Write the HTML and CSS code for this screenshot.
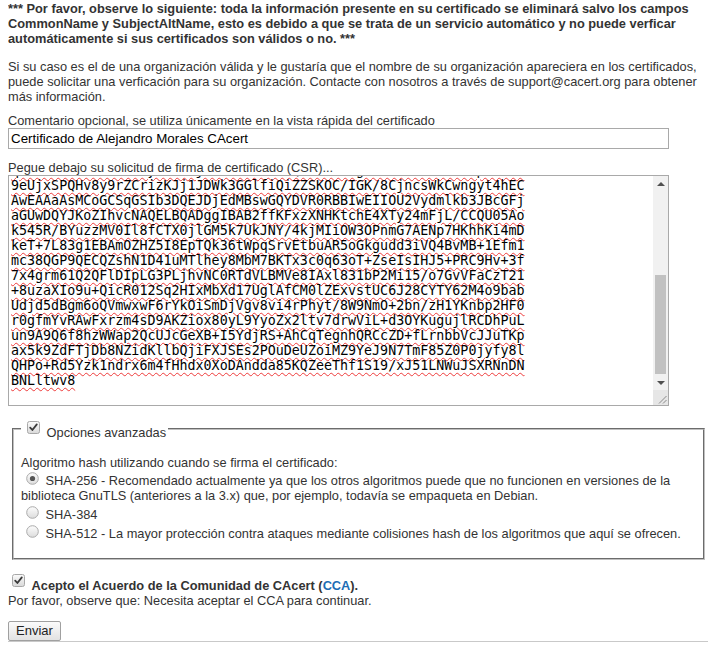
FILE: index.html
```html
<!DOCTYPE html>
<html lang="es">
<head>
<meta charset="utf-8">
<title>Nuevo certificado de servidor</title>
<link rel="stylesheet" href="styles.css">
</head>
<body>
<p class="warn">*** Por favor, observe lo siguiente: toda la información presente en su certificado se eliminará salvo los campos CommonName y SubjectAltName, esto es debido a que se trata de un servicio automático y no puede verficar automáticamente si sus certificados son válidos o no. ***</p>
<p class="info">Si su caso es el de una organización válida y le gustaría que el nombre de su organización apareciera en los certificados, puede solicitar una verficación para su organización. Contacte con nosotros a través de support@cacert.org para obtener más información.</p>
<form class="csr-form">
  <label class="field-label" for="comment">Comentario opcional, se utiliza únicamente en la vista rápida del certificado</label>
  <input class="text-input" id="comment" type="text" value="Certificado de Alejandro Morales CAcert">
  <label class="field-label" for="csr">Pegue debajo su solicitud de firma de certificado (CSR)...</label>
  <div class="csr-wrap">
  <textarea class="csr" id="csr">-----BEGIN CERTIFICATE REQUEST-----
MIIEpzCCAo8CAQAwLDEqMCgGA1UEAxMhU2Vydmlkb3JBcGFjaGUubW9yYWxlcy5s
b2NhbGRvbWFpbjCCAiIwDQYJKoZIhvcNAQEBBQADggIPADCCAgoCggIBAMx3q1Zk
Tg8pXQ2rWk7hY4bNv1LsJfE9aCmO3uRz6dKiV0yHnGtB5xPqWe2oAjUlSc8MvDr7
Hf4kZa9NbYpQi1wEtLm6RgCx3sVuJo0dKe5nTyBhAqFz2WcXlMiP7rGv8OjUs4Dk
Lq9eNb3wTy6HmAcRf1xVzKpI0gSoE7dJu2iYnMhCt5lWaBv8QeXr4PkFsDg6zNjO
pU3yKcGmA1oTb7eRwLx9fVh2iSnZq0dE5jMtY8uBkCl4WaHrNs6gPvIzXo1eQfDy
Fn0hRk2XbVwJq7mCtLs9aEoPd5yGiU3zKe8rBxWl1NfQvTj4YhMcAp6SuO0gDzIa
Vt5cLmY8qBeGd2kWnR0xHsPj3uAfT9iOzK1lMbEr7gXyNwCv4hUaSeQ6oIdpZ5Fn
Jb2xQw9RkTmAe1sLhVgP7uYc3nKzDo0iXf8tGrM5EyBqHaW4lCjOvN6dSpUI2eZk
Xr7nBy5Mh1aKtQwLe9cGs3fVpDj0oUzRi8TbNxE2mYkAqW4lHg6vCSdPuZOIFJ5n
qD1zWe8sRbXnTkVu3yGhLa0jMc7Pi9fEo5tQYwK2NbSgrUAZdlHx4vICm6pBOJFe
9eUjxSPQHv8y9rZCrizKJj1JDWk3GGlfiQiZZSKOC/IGK/8CjncsWkCwngyt4hEC
AwEAAaAsMCoGCSqGSIb3DQEJDjEdMBswGQYDVR0RBBIwEIIOU2Vydmlkb3JBcGFj
aGUwDQYJKoZIhvcNAQELBQADggIBAB2ffKFxzXNHKtchE4XTy24mFjL/CCQU05Ao
k545R/BYuzzMV0Il8fCTX0jlGM5k7UkJNY/4kjMIiOW3OPnmG7AENp7HKhhKi4mD
keT+7L83g1EBAmOZHZ5I8EpTQk36tWpqSrvEtbuAR5oGkgudd3iVQ4BvMB+1Efm1
mc38QGP9QECQZshN1D41uMTlhey8MbM7BKTx3c0q63oT+ZseIsIHJ5+PRC9Hv+3f
7x4grm61Q2QFlDIpLG3PLjhvNC0RTdVLBMVe8IAxl831bP2Mi15/o7GvVFaCzT21
+8uzaXIo9u+QicR012Sq2HIxMbXd17UglAfCM0lZExvstUC6J28CYTY62M4o9bab
Udjd5dBgm6oQVmwxwF6rYkOiSmDjVgv8vi4rPhyt/8W9NmO+2bn/zH1YKnbp2HF0
r0gfmYvRAwFxrzm4sD9AKZiox80yL9YyoZx2ltv7drwViL+d3OYKugujlRCDhPuL
un9A9Q6f8hzWWap2QcUJcGeXB+I5YdjRS+AhCqTegnhQRCcZD+fLrnbbVcJJuTKp
ax5k9ZdFTjDb8NZidKllbQjiFXJSEs2POuDeUZoiMZ9YeJ9N7TmF85Z0P0jyfy8l
QHPo+Rd5Yzk1ndrx6m4fHhdx0XoDAndda85KQZeeThf1S19/xJ51LNWuJSXRNnDN
BNLltwv8
</textarea>
  <div class="sb" aria-hidden="true">
    <div class="sb-btn"><span class="tri-up"></span></div>
    <div class="sb-track"><div class="sb-thumb"></div></div>
    <div class="sb-btn"><span class="tri-down"></span></div>
    <div class="sb-corner"><svg width="15" height="15" viewBox="0 0 15 15"><path d="M13.5 6 L6 13.5 M13.5 10 L10 13.5" stroke="#8a8a8a" stroke-width="1" fill="none"/></svg></div>
  </div>
  </div>

  <fieldset class="advanced">
    <legend class="adv-legend"><span class="check"><svg width="13" height="13" viewBox="0 0 13 13"><defs><linearGradient id="cbg" x1="0" y1="0" x2="0" y2="1"><stop offset="0" stop-color="#fbfbfb"/><stop offset="1" stop-color="#d9d9d9"/></linearGradient></defs><rect x="0.5" y="0.5" width="12" height="12" rx="2" fill="url(#cbg)" stroke="#a8a8a8"/><path d="M3.2 6.6 L5.4 9 L9.8 3.4" fill="none" stroke="#3a3a3a" stroke-width="1.8" stroke-linecap="round" stroke-linejoin="round"/></svg></span> Opciones avanzadas</legend>
    <div class="algo">Algoritmo hash utilizando cuando se firma el certificado:</div>
    <div class="opt opt-1"><span class="radio"><svg width="13" height="13" viewBox="0 0 13 13"><defs><linearGradient id="rbg" x1="0" y1="0" x2="0" y2="1"><stop offset="0" stop-color="#fdfdfd"/><stop offset="1" stop-color="#dcdcdc"/></linearGradient></defs><circle cx="6.5" cy="6.5" r="5.8" fill="url(#rbg)" stroke="#ababab"/><circle cx="6.5" cy="6.5" r="2.6" fill="#555"/></svg></span> SHA-256 - Recomendado actualmente ya que los otros algoritmos puede que no funcionen en versiones de la biblioteca GnuTLS (anteriores a la 3.x) que, por ejemplo, todavía se empaqueta en Debian.</div>
    <div class="opt opt-2"><span class="radio"><svg width="13" height="13" viewBox="0 0 13 13"><circle cx="6.5" cy="6.5" r="5.8" fill="url(#rbg)" stroke="#ababab"/></svg></span> SHA-384</div>
    <div class="opt opt-3"><span class="radio"><svg width="13" height="13" viewBox="0 0 13 13"><circle cx="6.5" cy="6.5" r="5.8" fill="url(#rbg)" stroke="#ababab"/></svg></span> SHA-512 - La mayor protección contra ataques mediante colisiones hash de los algoritmos que aquí se ofrecen.</div>
  </fieldset>

  <div class="accept"><span class="check"><svg width="13" height="13" viewBox="0 0 13 13"><rect x="0.5" y="0.5" width="12" height="12" rx="2" fill="url(#cbg)" stroke="#a8a8a8"/><path d="M3.2 6.6 L5.4 9 L9.8 3.4" fill="none" stroke="#3a3a3a" stroke-width="1.8" stroke-linecap="round" stroke-linejoin="round"/></svg></span> <strong>Acepto el Acuerdo de la Comunidad de CAcert (<a class="cca" href="#">CCA</a>).</strong></div>
  <div class="note">Por favor, observe que: Necesita aceptar el CCA para continuar.</div>
  <div class="actions"><button class="submit" type="button">Enviar</button></div>
</form>
<div class="footer-rule"></div>
<script src="script.js"></script>
</body>
</html>
```

FILE: styles.css
```css
html, body {
  background: #fff;
}
body {
  margin: 0 8px;
  padding-top: 1px;
  font-family: "Liberation Sans", Arial, sans-serif;
  font-size: 12.8px;
  line-height: 15px;
  color: #333;
}
.warn {
  margin: 0 0 13px;
  font-weight: bold;
}
.info {
  margin: 0 0 9px;
}
.csr-form {
  margin: 0;
}
.field-label {
  display: block;
}
.text-input {
  display: block;
  box-sizing: border-box;
  width: 661px;
  height: 21px;
  margin: 0 0 11px;
  padding: 1px 2px;
  border: 1px solid #a9a9a9;
  font-family: "Liberation Sans", Arial, sans-serif;
  font-size: 13.33px;
  color: #000;
  background: #fff;
}
.csr-wrap {
  position: relative;
  width: 661px;
  height: 231px;
}
.csr {
  display: block;
  box-sizing: border-box;
  width: 661px;
  height: 231px;
  margin: 0;
  padding: 2px 18px 2px 2px;
  border: 1px solid #a9a9a9;
  font-family: "DejaVu Sans Mono", monospace;
  font-size: 13.33px;
  line-height: 15px;
  color: #000;
  background: #fff;
  white-space: pre;
  overflow: hidden;
  resize: none;
  text-decoration: underline wavy #ee3b3b;
  text-decoration-thickness: 1px;
  text-underline-offset: 2px;
}
.sb {
  position: absolute;
  top: 1px;
  right: 1px;
  bottom: 1px;
  width: 15px;
  display: flex;
  flex-direction: column;
  background: #f1f1f1;
}
.sb-btn {
  height: 15px;
  flex: none;
  display: flex;
  align-items: center;
  justify-content: center;
}
.tri-up {
  width: 0;
  height: 0;
  border-left: 4px solid transparent;
  border-right: 4px solid transparent;
  border-bottom: 4px solid #505050;
}
.tri-down {
  width: 0;
  height: 0;
  border-left: 4px solid transparent;
  border-right: 4px solid transparent;
  border-top: 4px solid #505050;
}
.sb-track {
  flex: 1;
  display: flex;
  flex-direction: column;
  justify-content: flex-end;
  padding: 0 2px 1px;
}
.sb-thumb {
  height: 99px;
  background: #c1c1c1;
}
.sb-corner {
  height: 15px;
  flex: none;
  background: #e6e6e6;
}
.sb-corner svg {
  display: block;
}
.advanced {
  margin: 12px 3px 0 4px;
  padding: 6px 7px 17px;
  border: 2px groove #c0c0c0;
  min-width: 0;
}
.adv-legend {
  padding: 0 2px;
}
.check {
  display: inline-block;
  width: 13px;
  height: 13px;
  margin: 3px 3px 3px 4px;
  vertical-align: baseline;
}
.check svg, .radio svg {
  display: block;
}
.radio {
  display: inline-block;
  width: 13px;
  height: 13px;
  margin: 3px 3px 0 5px;
  vertical-align: baseline;
}
.algo {
  margin-top: 9px;
}
.opt-1 {
  margin-top: -1px;
}
.accept {
  margin-top: 11px;
}
.cca {
  color: #1d6db5;
  text-decoration: none;
}
.actions {
  margin-top: 13px;
  line-height: 0;
}
.submit {
  box-sizing: border-box;
  height: 20px;
  padding: 0 7px;
  border: 1px solid #a0a0a0;
  border-radius: 2px;
  background: linear-gradient(#fbfbfb, #e2e2e2);
  font-family: "Liberation Sans", Arial, sans-serif;
  font-size: 13px;
  line-height: 16px;
  color: #222;
}
.footer-rule {
  margin: 0 -8px;
  border-top: 1px solid #c9c9c9;
}
```

FILE: script.js
```js
document.querySelectorAll('textarea.csr').forEach(function (t) {
  t.scrollTop = t.scrollHeight;
});
```
